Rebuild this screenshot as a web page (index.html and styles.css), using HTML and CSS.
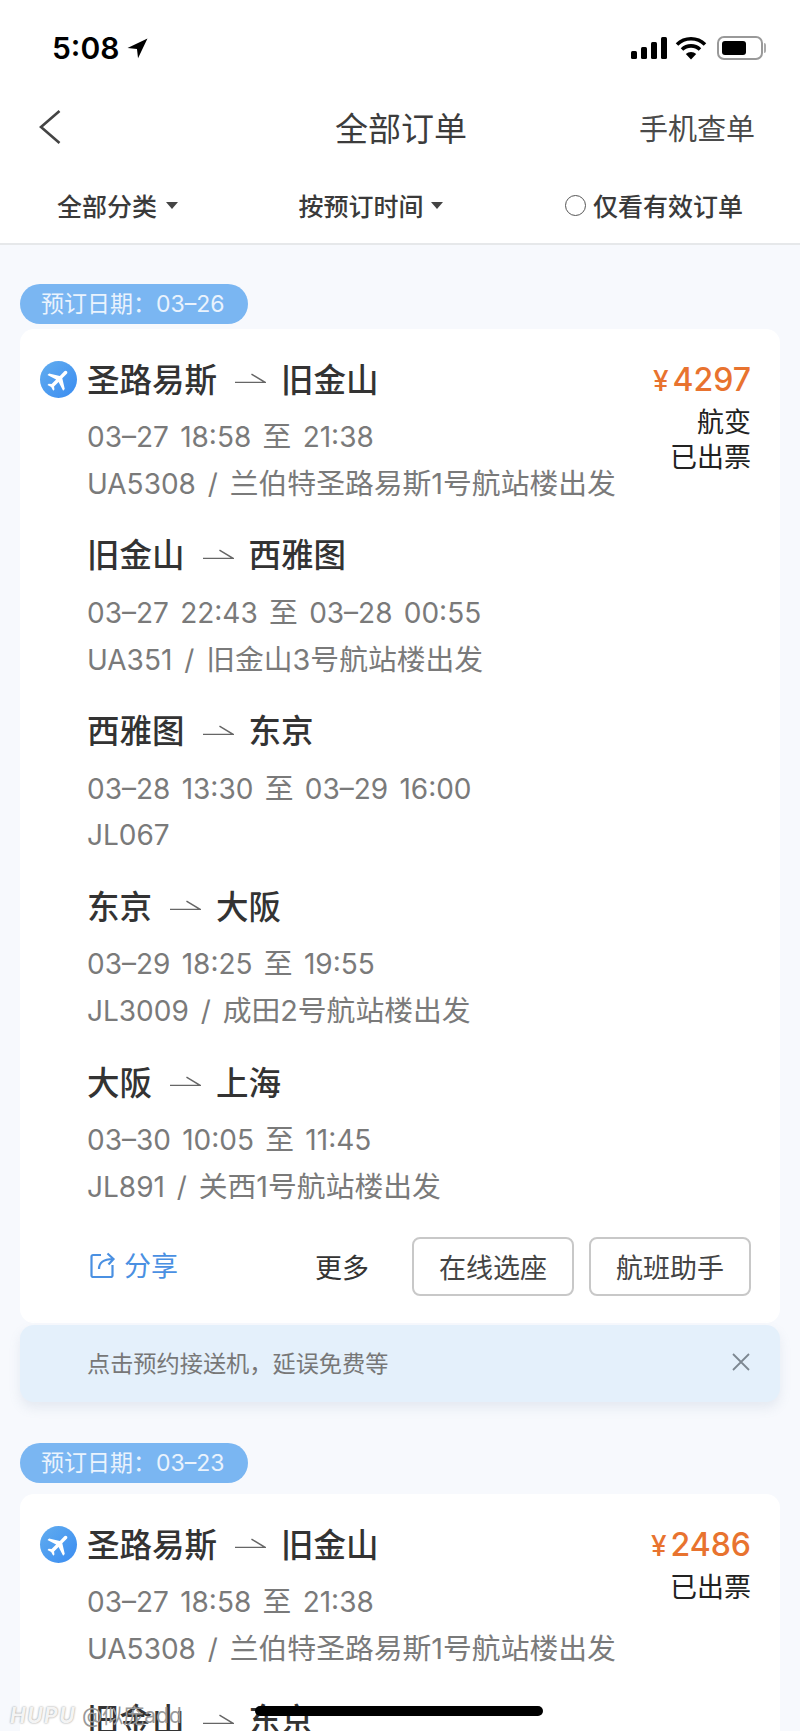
FILE: index.html
```html
<!DOCTYPE html>
<html lang="zh-CN">
<head>
    <meta charset="UTF-8">
    <meta name="viewport" content="width=device-width, initial-scale=1.0">
    <title>全部订单</title>
    <link rel="stylesheet" href="styles.css">
</head>
<body>
    <header class="top">
        <div class="status-bar">
            <div class="status-time">
                <span>5:08</span>
                <svg class="loc-icon" viewBox="0 0 20 20"><path d="M19.500.5 .5 9.500l9 .9 1 9z"/></svg>
            </div>
            <div class="status-icons">
                <svg class="signal-icon" viewBox="0 0 36 22"><rect x="0" y="14" width="6" height="8" rx="1.500"/><rect x="10" y="10" width="6" height="12" rx="1.500"/><rect x="20" y="5" width="6" height="17" rx="1.500"/><rect x="30" y="0" width="6" height="22" rx="1.500"/></svg>
                <svg class="wifi-icon" viewBox="0 0 32 24"><path d="M2 8.500a20 20 0 0 1 28 0M7 13.500a13 13 0 0 1 18 0" fill="none" stroke="#000" stroke-width="3.600"/><path d="M16 23.500 10.800 18a7.500 7.500 0 0 1 10.400 0z"/></svg>
                <div class="battery"><div class="battery-fill"></div></div>
            </div>
        </div>
        <nav class="nav">
            <svg class="back-icon" viewBox="0 0 22 34"><path d="M20.500 1 2 17l18.500 16" fill="none" stroke="#444" stroke-width="2.600"/></svg>
            <h1 class="nav-title">全部订单</h1>
            <a class="nav-link">手机查单</a>
        </nav>
        <div class="filters">
            <span class="filter filter-type">全部分类<i class="caret"></i></span>
            <span class="filter filter-sort">按预订时间<i class="caret"></i></span>
            <span class="filter filter-valid"><i class="radio"></i>仅看有效订单</span>
        </div>
    </header>

    <main class="list">
        <div class="date-tag">预订日期：03–26</div>
        <section class="card">
            <div class="card-body">
                <div class="plane-badge">
                    <svg viewBox="0 0 24 24"><path transform="rotate(45 12 12)" d="M21 16v-2l-8-5V3.500c0-.83-.67-1.500-1.500-1.500S10 2.670 10 3.500V9l-8 5v2l8-2.500V19l-2 1.500V22l3.500-1 3.500 1v-1.500L13 19v-5.500z"/></svg>
                </div>
                <div class="segments">
                    <div class="segment">
                        <div class="route"><span>圣路易斯</span><svg class="arrow" viewBox="0 0 32 12"><path d="M0 10.500h31L17 2" fill="none" stroke="#666" stroke-width="1.500"/></svg><span>旧金山</span></div>
                        <div class="info">03–27 18:58 <span class="cn">至</span> 21:38</div>
                        <div class="info">UA5308 <span class="sep">/</span> <span class="cn">兰伯特圣路易斯1号航站楼出发</span></div>
                    </div>
                    <div class="segment">
                        <div class="route"><span>旧金山</span><svg class="arrow" viewBox="0 0 32 12"><path d="M0 10.500h31L17 2" fill="none" stroke="#666" stroke-width="1.500"/></svg><span>西雅图</span></div>
                        <div class="info">03–27 22:43 <span class="cn">至</span> 03–28 00:55</div>
                        <div class="info">UA351 <span class="sep">/</span> <span class="cn">旧金山3号航站楼出发</span></div>
                    </div>
                    <div class="segment">
                        <div class="route"><span>西雅图</span><svg class="arrow" viewBox="0 0 32 12"><path d="M0 10.500h31L17 2" fill="none" stroke="#666" stroke-width="1.500"/></svg><span>东京</span></div>
                        <div class="info">03–28 13:30 <span class="cn">至</span> 03–29 16:00</div>
                        <div class="info">JL067</div>
                    </div>
                    <div class="segment">
                        <div class="route"><span>东京</span><svg class="arrow" viewBox="0 0 32 12"><path d="M0 10.500h31L17 2" fill="none" stroke="#666" stroke-width="1.500"/></svg><span>大阪</span></div>
                        <div class="info">03–29 18:25 <span class="cn">至</span> 19:55</div>
                        <div class="info">JL3009 <span class="sep">/</span> <span class="cn">成田2号航站楼出发</span></div>
                    </div>
                    <div class="segment">
                        <div class="route"><span>大阪</span><svg class="arrow" viewBox="0 0 32 12"><path d="M0 10.500h31L17 2" fill="none" stroke="#666" stroke-width="1.500"/></svg><span>上海</span></div>
                        <div class="info">03–30 10:05 <span class="cn">至</span> 11:45</div>
                        <div class="info">JL891 <span class="sep">/</span> <span class="cn">关西1号航站楼出发</span></div>
                    </div>
                </div>
                <div class="price-box">
                    <div class="price"><small>¥</small>4297</div>
                    <div class="state">航变</div>
                    <div class="state">已出票</div>
                </div>
            </div>
            <div class="card-actions">
                <a class="share">
                    <svg class="share-icon" viewBox="0 0 26 26"><path d="M11 3H3a1.500 1.500 0 0 0-1.500 1.500v19A1.500 1.500 0 0 0 3 25h18a1.500 1.500 0 0 0 1.500-1.500V13M9 17c0-6 4-10 14-10M17.500 1.500 23.500 7l-5 5.500" fill="none" stroke="#4a90e2" stroke-width="2.200"/></svg>
                    <span>分享</span>
                </a>
                <span class="more">更多</span>
                <button class="btn">在线选座</button>
                <button class="btn">航班助手</button>
            </div>
        </section>
        <div class="tip">
            <span>点击预约接送机，延误免费等</span>
            <svg class="close-icon" viewBox="0 0 20 20"><path d="M2 2l16 16M18 2 2 18" fill="none" stroke="#7d8791" stroke-width="1.800"/></svg>
        </div>

        <div class="date-tag date-tag-next">预订日期：03–23</div>
        <section class="card">
            <div class="card-body">
                <div class="plane-badge">
                    <svg viewBox="0 0 24 24"><path transform="rotate(45 12 12)" d="M21 16v-2l-8-5V3.500c0-.83-.67-1.500-1.500-1.500S10 2.670 10 3.500V9l-8 5v2l8-2.500V19l-2 1.500V22l3.500-1 3.500 1v-1.500L13 19v-5.500z"/></svg>
                </div>
                <div class="segments">
                    <div class="segment">
                        <div class="route"><span>圣路易斯</span><svg class="arrow" viewBox="0 0 32 12"><path d="M0 10.500h31L17 2" fill="none" stroke="#666" stroke-width="1.500"/></svg><span>旧金山</span></div>
                        <div class="info">03–27 18:58 <span class="cn">至</span> 21:38</div>
                        <div class="info">UA5308 <span class="sep">/</span> <span class="cn">兰伯特圣路易斯1号航站楼出发</span></div>
                    </div>
                    <div class="segment">
                        <div class="route"><span>旧金山</span><svg class="arrow" viewBox="0 0 32 12"><path d="M0 10.500h31L17 2" fill="none" stroke="#666" stroke-width="1.500"/></svg><span>东京</span></div>
                    </div>
                </div>
                <div class="price-box">
                    <div class="price"><small>¥</small>2486</div>
                    <div class="state">已出票</div>
                </div>
            </div>
        </section>
    </main>

    <!-- 截图上的水印和 home 条 -->
    <div class="watermark"><em>HUPU</em> @似庞add</div>
    <div class="home-bar"></div>
</body>
</html>
```

FILE: styles.css
```css
* {
    box-sizing: border-box;
}
html, body {
    margin: 0;
    padding: 0;
}
body {
    position: relative;
    height: 1731px;
    overflow: hidden;
    background: #f7f9fd;
    color: #333;
    font-family: Inter, "Noto Sans CJK SC", sans-serif;
}

/* 顶部 */
.top {
    height: 245px;
    background: #fff;
    border-bottom: 2px solid #e6e8ea;
}
.status-bar {
    height: 95px;
    padding: 29px 34px 0 52px;
    display: flex;
    justify-content: space-between;
    align-items: flex-start;
}
.status-time {
    display: flex;
    align-items: center;
    gap: 8px;
    color: #000;
    font-size: 30px;
    font-weight: 600;
    line-height: 38px;
}
.loc-icon {
    width: 21px;
    height: 21px;
}
.status-icons {
    display: flex;
    align-items: center;
    height: 38px;
}
.signal-icon {
    width: 36px;
    height: 22px;
}
.wifi-icon {
    width: 32px;
    height: 24px;
    margin-left: 8px;
}
.battery {
    position: relative;
    width: 46px;
    height: 24px;
    margin: 0 3px 0 10px;
    padding: 3px;
    border: 2px solid #999;
    border-radius: 7px;
}
.battery::after {
    content: "";
    position: absolute;
    right: -5px;
    top: 5px;
    width: 2px;
    height: 10px;
    background: #aaa;
    border-radius: 0 2px 2px 0;
}
.battery-fill {
    width: 24px;
    height: 14px;
    background: #000;
    border-radius: 3px;
}
.nav {
    position: relative;
    height: 64px;
    padding: 0 45px 0 39px;
    display: flex;
    align-items: center;
    justify-content: space-between;
}
.back-icon {
    width: 22px;
    height: 34px;
}
.nav-title {
    position: absolute;
    left: 335px;
    margin: 0;
    font-size: 33px;
    font-weight: 400;
    color: #3c3c3c;
}
.nav-link {
    font-size: 29px;
    color: #4a4a4a;
}
.filters {
    position: relative;
    height: 60px;
    margin-top: 16px;
    padding: 0 57px 0 57px;
    display: flex;
    align-items: center;
    justify-content: space-between;
}
.filter {
    display: flex;
    align-items: center;
    font-size: 25px;
    font-weight: 500;
    color: #3a3a3a;
}
.caret {
    width: 0;
    height: 0;
    margin-left: 9px;
    border: 6px solid transparent;
    border-top: 7px solid #444;
    border-bottom: 0;
}
.filter-sort .caret {
    margin: 0 2px 0 7px;
}
.radio {
    width: 21px;
    height: 21px;
    margin-right: 7px;
    border: 1.500px solid #555;
    border-radius: 50%;
}

/* 订单列表 */
.list {
    padding: 39px 20px 0;
}
.date-tag {
    width: 228px;
    height: 40px;
    padding-left: 21px;
    margin-bottom: 5px;
    border-radius: 20px;
    background: #7ab6f2;
    color: #eaf3fd;
    font-size: 23px;
    line-height: 40px;
}
.date-tag-next {
    margin-top: 41px;
    margin-bottom: 11px;
}
.card {
    background: #fff;
    border-radius: 14px;
    padding: 25px 29px 27px 20px;
}
.card-body {
    display: flex;
    align-items: flex-start;
}
.plane-badge {
    width: 37px;
    height: 37px;
    margin: 7px 10px 0 0;
    flex-shrink: 0;
    border-radius: 50%;
    background: linear-gradient(135deg, #62adef, #3a8cf1);
    display: flex;
    align-items: center;
    justify-content: center;
}
.plane-badge svg {
    width: 28px;
    height: 28px;
    fill: #fff;
}
.segments {
    flex: 1;
}
.segment + .segment {
    margin-top: 22.750px;
}
.route {
    display: flex;
    align-items: center;
    height: 46px;
    font-size: 32.500px;
    font-weight: 500;
    color: #333;
}
.arrow {
    width: 31px;
    height: 12px;
    margin: 2px 15px 0 18px;
}
.info {
    height: 47px;
    font-size: 28px;
    line-height: 47px;
    word-spacing: 3.400px;
    color: #7a7a7a;
}
.cn {
    font-size: 28.800px;
}
.sep {
    margin: 0 0.600px;
}
.route + .info {
    margin-top: 13px;
}
.price-box {
    text-align: right;
}
.price {
    height: 50px;
    margin-top: 1px;
    font-size: 32px;
    font-weight: 500;
    line-height: 50px;
    color: #e8732f;
}
.price small {
    font-size: 28px;
    margin-right: 4px;
}
.state {
    font-size: 27px;
    line-height: 35px;
    color: #222;
}
.card-actions {
    margin-top: 27px;
    display: flex;
    align-items: center;
    white-space: nowrap;
}
.share {
    display: flex;
    align-items: center;
    gap: 8px;
    margin: -4px auto 0 50px;
    font-size: 27px;
    color: #4a90e2;
}
.share-icon {
    width: 26px;
    height: 26px;
}
.more {
    font-size: 27px;
    color: #333;
}
.btn {
    width: 162px;
    height: 59px;
    margin-left: 15px;
    padding: 0;
    background: #fff;
    border: 2px solid #c8c8c8;
    border-radius: 8px;
    font-family: inherit;
    font-size: 27px;
    color: #444;
}
.more + .btn {
    margin-left: 43px;
}
.tip {
    height: 77px;
    margin-top: 2px;
    padding: 0 29px 3px 67px;
    display: flex;
    align-items: center;
    justify-content: space-between;
    background: #e4f0fb;
    border-radius: 14px;
    box-shadow: 0 6px 12px rgba(120, 140, 170, 0.14);
    font-size: 23.200px;
    color: #777;
}
.close-icon {
    width: 20px;
    height: 20px;
}

/* 叠在上面的 */
.watermark {
    position: absolute;
    left: 10px;
    top: 1699px;
    font-size: 21px;
    color: #999;
    white-space: nowrap;
}
.watermark em {
    color: #f4f4f4;
    font-weight: 700;
    letter-spacing: 1.500px;
    text-shadow: 0 0 2px #888;
}
.home-bar {
    position: absolute;
    left: 255px;
    top: 1706px;
    width: 288px;
    height: 10px;
    border-radius: 5px;
    background: #000;
}
```
